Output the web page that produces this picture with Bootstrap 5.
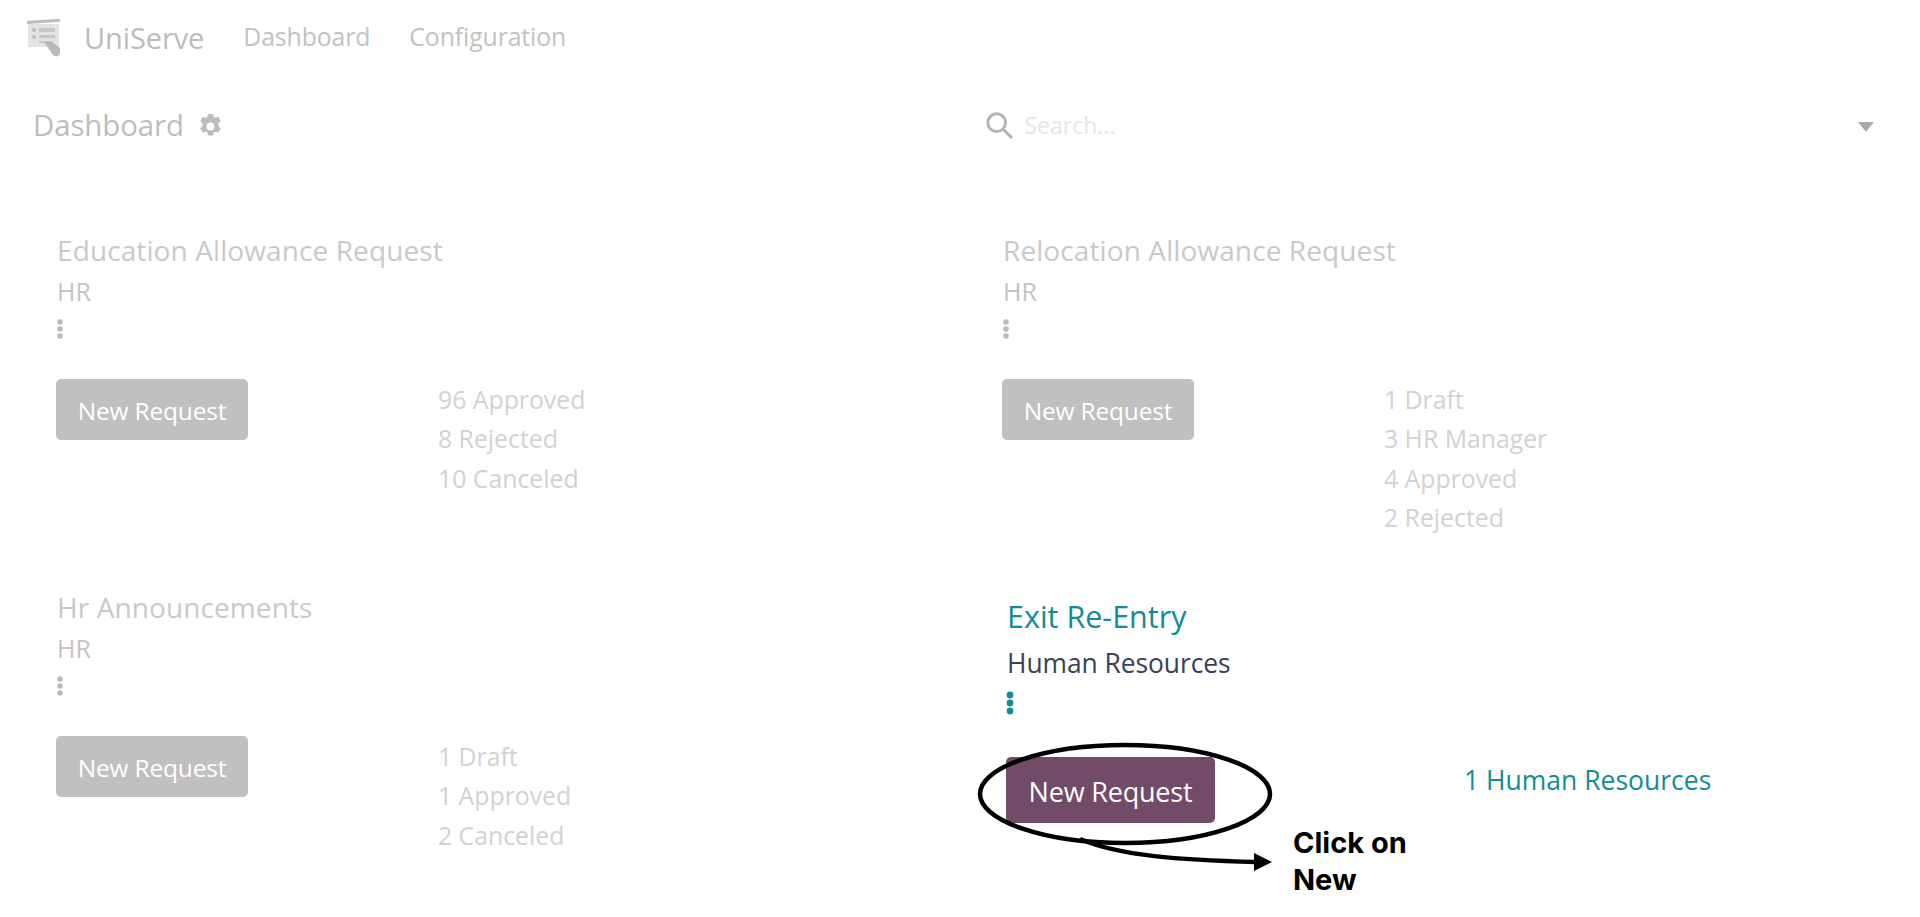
<!DOCTYPE html>
<html lang="en">
<head>
<meta charset="utf-8">
<title>UniServe</title>
<link href="https://cdn.jsdelivr.net/npm/bootstrap@5.3.0/dist/css/bootstrap.min.css" rel="stylesheet">
<style>
body{font-family:"Open Sans","Noto Sans",sans-serif;background:#fff;color:#bdbdbd;position:relative;height:917px;overflow:hidden}
.topbar{height:74px;padding:0 0 0 26px;gap:0}
.brand-name{font-size:29px;color:#bcbcbc;margin:0 39px 0 22px;line-height:1;letter-spacing:-.1px}
.top-link{font-size:24.8px;color:#c2c2c2;text-decoration:none;margin-right:39px;line-height:1;letter-spacing:-.1px;padding-bottom:2px}
.panel{height:104px;padding:0 46px 0 33px}
.panel-title{font-size:29.4px;color:#bdbdbd;letter-spacing:-.1px;line-height:1}
.panel-gear{margin-left:12px}
.search-box{margin-left:31px;padding-bottom:2px}
.search-ph{font-size:23px;color:#e6e6e6;margin-left:12px}
.tiles{padding-left:56px;grid-template-columns:946px 1fr}
.tile{height:357px;padding-top:56px}
.tile-head{font-size:28px;color:#c9c9c9;line-height:1.2;height:41px;letter-spacing:.1px;margin-left:1px}
.tile-sub{font-size:25px;color:#c4c4c4;line-height:1.2;height:43px;margin:1px 0 0 1px}
.tile-dots{height:20px;margin-bottom:40px;display:block}
.req-btn{background:#c0c0c0;color:#fff;border:0;border-radius:5px;font-size:24.5px;width:192px;height:61px;padding:3px 0 0;letter-spacing:-.2px}
.req-btn:hover{background:#c0c0c0;color:#fff}
.stat-col{margin-left:190px;padding-top:1px;font-size:24.8px;color:#d2d2d2;line-height:39.3px}
.tile-live{padding-top:63px}
.tile-live .tile-head{font-size:30.5px;color:#128c96;height:49px;margin-left:5px;letter-spacing:0}
.tile-live .tile-sub{font-size:26.4px;color:#374256;height:43px;margin:1px 0 0 5px;letter-spacing:-.05px}
.tile-live .tile-dots{margin:0 0 42px 4px;height:24px}
.tile-live .req-btn{background:#714b67;width:209px;height:66px;margin-left:4px;font-size:27px;padding-top:5px}
.tile-live .stat-col{margin-left:249px;padding-top:4px;font-size:26.5px;color:#128c96;line-height:38px}
.mark-layer{position:absolute;left:0;top:0;pointer-events:none}
.mark-note{position:absolute;left:1293px;top:824px;font-family:Inter,"Liberation Sans",sans-serif;font-weight:700;font-size:29px;line-height:37px;color:#000}
</style>
</head>
<body>
<nav class="d-flex align-items-center topbar">
  <svg width="36" height="40" viewBox="0 0 36 40" aria-hidden="true">
    <rect x="1" y="3" width="33" height="3" fill="#bcbcbc" transform="rotate(-4 17 4)"/>
    <rect x="2" y="7" width="31" height="23" fill="#e3e3e3"/>
    <circle cx="8" cy="13" r="2" fill="#bdbdbd"/><circle cx="8" cy="20" r="2" fill="#bdbdbd"/>
    <rect x="13" y="11" width="16" height="4" fill="#c6c6c6"/><rect x="13" y="18" width="16" height="3" fill="#c6c6c6"/><rect x="13" y="24" width="9" height="2" fill="#c6c6c6"/>
    <path d="M18 25l7-1 9 7v5a4 4 0 0 1-7 2z" fill="#b9b9b9"/>
  </svg>
  <span class="brand-name">UniServe</span>
  <a class="top-link" href="#">Dashboard</a>
  <a class="top-link" href="#">Configuration</a>
</nav>
<div class="d-flex panel">
  <div class="w-50 d-flex align-items-center">
    <span class="panel-title">Dashboard</span>
    <svg class="panel-gear" width="29" height="29" viewBox="0 0 16 16" fill="#bdbdbd" aria-hidden="true"><path fill-rule="evenodd" d="M9.4 1.1l.4 1.7c.3.1.6.3.9.4l1.6-.6 1.4 2.400-1.300 1.200v1.600l1.300 1.200-1.400 2.400-1.600-.6c-.3.2-.6.3-.9.4l-.4 1.700H6.600l-.4-1.700c-.3-.1-.6-.2-.9-.4l-1.600.6-1.400-2.400 1.300-1.200V6.200L2.300 5l1.400-2.400 1.600.6c.3-.2.6-.3.9-.4l.4-1.700zM8 5.800a2.200 2.200 0 1 0 0 4.400 2.200 2.200 0 0 0 0-4.400z"/></svg>
  </div>
  <div class="w-50 d-flex align-items-center justify-content-between">
    <div class="d-flex align-items-center search-box">
      <svg width="28" height="28" viewBox="0 0 30 30" fill="none" stroke="#b4b4b4" stroke-width="3.200" aria-hidden="true"><circle cx="12.500" cy="12.500" r="9.500"/><path d="M19.500 19.500L28 28" stroke-linecap="round"/></svg>
      <span class="search-ph">Search...</span>
    </div>
    <svg width="16" height="11" viewBox="0 0 18 12" fill="#a9a9a9" aria-hidden="true"><path d="M0 1h18l-9 11z"/></svg>
  </div>
</div>
<div class="d-grid tiles">
  <div class="tile">
    <div class="tile-head">Education Allowance Request</div>
    <div class="tile-sub">HR</div>
    <svg class="tile-dots" width="8" height="20" viewBox="0 0 8 20" fill="#bbb" aria-hidden="true"><circle cx="4" cy="3" r="2.800"/><circle cx="4" cy="10" r="2.800"/><circle cx="4" cy="17" r="2.800"/></svg>
    <div class="d-flex align-items-start">
      <button class="btn req-btn">New Request</button>
      <div class="stat-col"><div>96 Approved</div><div>8 Rejected</div><div>10 Canceled</div></div>
    </div>
  </div>
  <div class="tile">
    <div class="tile-head">Relocation Allowance Request</div>
    <div class="tile-sub">HR</div>
    <svg class="tile-dots" width="8" height="20" viewBox="0 0 8 20" fill="#bbb" aria-hidden="true"><circle cx="4" cy="3" r="2.800"/><circle cx="4" cy="10" r="2.800"/><circle cx="4" cy="17" r="2.800"/></svg>
    <div class="d-flex align-items-start">
      <button class="btn req-btn">New Request</button>
      <div class="stat-col"><div>1 Draft</div><div>3 HR Manager</div><div>4 Approved</div><div>2 Rejected</div></div>
    </div>
  </div>
  <div class="tile">
    <div class="tile-head">Hr Announcements</div>
    <div class="tile-sub">HR</div>
    <svg class="tile-dots" width="8" height="20" viewBox="0 0 8 20" fill="#bbb" aria-hidden="true"><circle cx="4" cy="3" r="2.800"/><circle cx="4" cy="10" r="2.800"/><circle cx="4" cy="17" r="2.800"/></svg>
    <div class="d-flex align-items-start">
      <button class="btn req-btn">New Request</button>
      <div class="stat-col"><div>1 Draft</div><div>1 Approved</div><div>2 Canceled</div></div>
    </div>
  </div>
  <div class="tile tile-live">
    <div class="tile-head">Exit Re-Entry</div>
    <div class="tile-sub">Human Resources</div>
    <svg class="tile-dots" width="8" height="24" viewBox="0 0 8 24" fill="#128c96" aria-hidden="true"><circle cx="4" cy="4" r="3.400"/><circle cx="4" cy="12" r="3.400"/><circle cx="4" cy="20" r="3.400"/></svg>
    <div class="d-flex align-items-start">
      <button class="btn req-btn">New Request</button>
      <div class="stat-col">1 Human Resources</div>
    </div>
  </div>
</div>
<svg class="mark-layer" width="1920" height="917" viewBox="0 0 1920 917" fill="none" aria-hidden="true">
  <ellipse cx="1125" cy="794" rx="145" ry="49" stroke="#000" stroke-width="4.500"/>
  <path d="M1080 839C1120 856 1180 860 1256 862" stroke="#000" stroke-width="4.500"/>
  <path d="M1254 853l18 9-18 9z" fill="#000"/>
</svg>
<div class="mark-note">Click on<br>New</div>
</body>
</html>
